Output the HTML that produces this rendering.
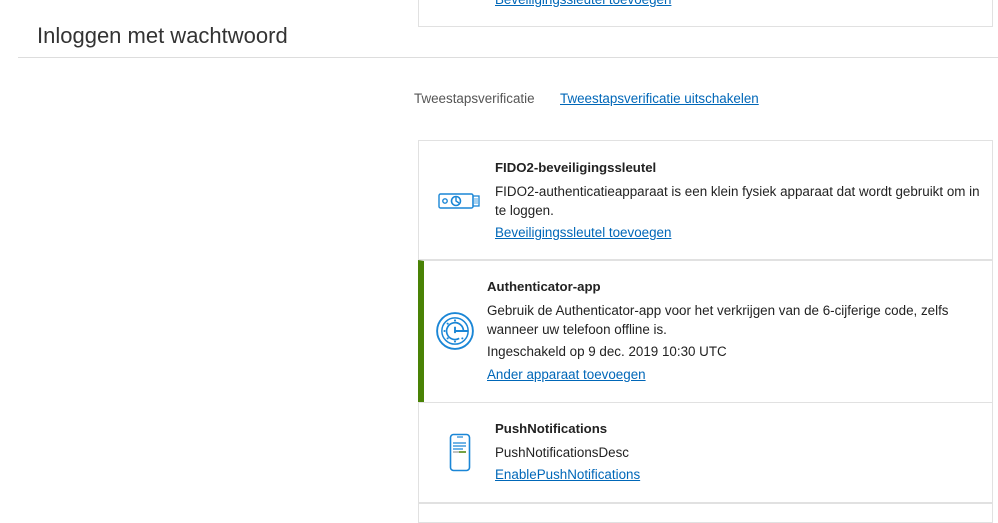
<!DOCTYPE html>
<html><head><meta charset="utf-8"><style>
*{margin:0;padding:0;box-sizing:border-box}
body{width:998px;height:510px;overflow:hidden;background:#fff;font-family:"Liberation Sans",Arial,sans-serif;color:#222;font-size:13.4px;position:relative}
.abs{position:absolute}
a{color:#0067b8;text-decoration:underline;white-space:nowrap}
.card{position:absolute;left:418px;width:575px;border:1px solid #e1e1e1;background:#fff}
.t{position:absolute;font-weight:bold;font-size:13.2px;white-space:nowrap}
.l{position:absolute;white-space:nowrap;line-height:19px}
</style></head><body>
<div class="card" style="top:-5px;height:32px">
  <a class="l" style="left:76px;top:-6px">Beveiligingssleutel toevoegen</a>
</div>
<div class="abs" style="left:37px;top:23px;font-size:22px;color:#333">Inloggen met wachtwoord</div>
<div class="abs" style="left:18px;top:57px;width:980px;height:1px;background:#ddd"></div>
<div class="abs" style="left:414px;top:91px;color:#555;font-size:13.4px">Tweestapsverificatie</div>
<a class="abs" style="left:560px;top:91px;font-size:13.4px">Tweestapsverificatie uitschakelen</a>

<div class="card" style="top:140px;height:120px">
  <svg class="abs" style="left:19px;top:49px" width="44" height="22" viewBox="0 0 44 22">
    <rect x="1" y="4" width="34" height="14" rx="1.5" fill="none" stroke="#1a86d6" stroke-width="1.4"/>
    <circle cx="7" cy="11" r="2.2" fill="none" stroke="#1a86d6" stroke-width="1.4"/>
    <circle cx="18" cy="11" r="4.5" fill="none" stroke="#1a86d6" stroke-width="1.6"/>
    <path d="M18 7v4l3 2" fill="none" stroke="#1a86d6" stroke-width="1.4"/>
    <rect x="35" y="6" width="6" height="10" fill="none" stroke="#1a86d6" stroke-width="1.3"/>
    <path d="M36 9h4M36 11h4M36 13h4" stroke="#1a86d6" stroke-width="0.8"/>
  </svg>
  <div class="t" style="left:76px;top:19px">FIDO2-beveiligingssleutel</div>
  <div class="l" style="left:76px;top:41px">FIDO2-authenticatieapparaat is een klein fysiek apparaat dat wordt gebruikt om in<br>te loggen.</div>
  <a class="l" style="left:76px;top:82px">Beveiligingssleutel toevoegen</a>
</div>

<div class="card" style="top:260px;height:143px;border-left:6px solid #498205">
  <svg class="abs" style="left:11px;top:50px" width="40" height="40" viewBox="0 0 38 38">
    <circle cx="19" cy="19" r="17" fill="none" stroke="#1a86d6" stroke-width="1.8"/>
    <circle cx="19" cy="19" r="12.5" fill="none" stroke="#1a86d6" stroke-width="1.4"/>
    <path d="M27 19a8 8 0 1 0-4 7" fill="none" stroke="#1a86d6" stroke-width="1.6"/>
    <path d="M19 19h12M19 15v6" fill="none" stroke="#1a86d6" stroke-width="1.8"/>
    <circle cx="19" cy="9" r="1" fill="#1a86d6"/><circle cx="9" cy="19" r="1" fill="#1a86d6"/>
    <circle cx="12" cy="12" r="1" fill="#1a86d6"/><circle cx="12" cy="26" r="1" fill="#1a86d6"/>
    <circle cx="19" cy="29" r="1" fill="#1a86d6"/><circle cx="26" cy="26" r="1" fill="#1a86d6"/>
  </svg>
  <div class="t" style="left:63px;top:18px">Authenticator-app</div>
  <div class="l" style="left:63px;top:40px">Gebruik de Authenticator-app voor het verkrijgen van de 6-cijferige code, zelfs<br>wanneer uw telefoon offline is.</div>
  <div class="l" style="left:63px;top:81px">Ingeschakeld op 9 dec. 2019 10:30 UTC</div>
  <a class="l" style="left:63px;top:104px">Ander apparaat toevoegen</a>
</div>

<div class="card" style="top:402px;height:101px">
  <svg class="abs" style="left:30px;top:30px" width="22" height="40" viewBox="0 0 22 40">
    <rect x="1.5" y="1.5" width="19" height="36" rx="3" fill="none" stroke="#1a86d6" stroke-width="1.6"/>
    <path d="M8 4h6" stroke="#1a86d6" stroke-width="1.2"/>
    <path d="M4 10h13M4 13h13M4 16h10" stroke="#1a86d6" stroke-width="1.2"/>
    <path d="M4 19h6" stroke="#aaa" stroke-width="1.5"/><path d="M10 19h7" stroke="#498205" stroke-width="1.5"/>
  </svg>
  <div class="t" style="left:76px;top:18px">PushNotifications</div>
  <div class="l" style="left:76px;top:40px">PushNotificationsDesc</div>
  <a class="l" style="left:76px;top:62px">EnablePushNotifications</a>
</div>
<div class="card" style="top:503px;height:20px"></div>
</body></html>
